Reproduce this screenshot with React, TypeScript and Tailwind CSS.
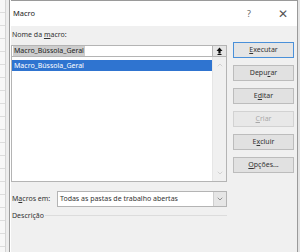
import { ChevronDown, ChevronUp } from "lucide-react";

const font = { fontFamily: '"Noto Sans", "Open Sans", sans-serif' };

function U({ children }: { children: React.ReactNode }) {
  return <span className="underline underline-offset-[1px]">{children}</span>;
}

function DlgButton({
  children,
  primary,
  disabled,
}: {
  children: React.ReactNode;
  primary?: boolean;
  disabled?: boolean;
}) {
  return (
    <div
      className={
        "flex h-[16px] items-center justify-center border text-[7px] " +
        (primary
          ? "border-[#4a90d9] bg-[#e5e5e5] text-[#333]"
          : disabled
            ? "border-[#d2d2d2] bg-[#e8e8e8] text-[#a8a8a8]"
            : "border-[#bcbcbc] bg-[#e1e1e1] text-[#333]")
      }
    >
      {children}
    </div>
  );
}

function SheetStrip() {
  const rows = Array.from({ length: 19 });
  return (
    <div className="flex h-full w-[11px] shrink-0">
      <div className="flex w-[6px] flex-col border-r border-[#d4d4d4] bg-[#f7f7f7]">
        {rows.map((_, i) => (
          <div key={i} className="h-[13px] shrink-0 border-b border-[#dcdcdc]" />
        ))}
      </div>
      <div className="w-[4px] border-r border-[#9a9a9a] bg-[#ececec]" />
    </div>
  );
}

export default function App() {
  return (
    <div className="flex h-[252px] w-[300px] overflow-hidden bg-white" style={font}>
      <SheetStrip />
      <div className="flex w-[286px] shrink-0 flex-col border-t border-[#9a9a9a]">
        <div className="flex h-[25px] shrink-0 items-center bg-white pl-[2px] text-[7.5px] text-[#222]">
          <span>Macro</span>
          <span className="ml-auto mr-[27px] text-[9px] text-[#666]">?</span>
          <span className="mr-[9px] text-[12px] font-extralight leading-none text-[#555]">✕</span>
        </div>
        <div className="flex flex-1 bg-[#f0f0f0]">
          <div className="flex w-[216px] shrink-0 flex-col">
            <div className="mt-[3px] h-[12px] pl-[1px] text-[7px] leading-[12px] text-[#333]">
              Nome da <U>m</U>acro:
            </div>
            <div className="mt-[4px] flex h-[12px]">
              <div className="flex flex-1 items-center border border-[#b4b4b4] bg-white pl-[1px]">
                <span className="bg-[#cdcdcd] px-[1px] text-[7px] leading-[10px] text-[#222]">
                  Macro_Bússola_Geral
                </span>
              </div>
              <div className="flex w-[14px] items-center justify-center border border-l-0 border-[#b4b4b4] bg-[#e6e6e6]">
                <svg width="7" height="8" viewBox="0 0 7 8">
                  <path d="M3.5 0.5 L6.5 4 L4.6 4 L4.6 6.5 L2.4 6.5 L2.4 4 L0.5 4 Z" fill="#111" />
                  <rect x="1.5" y="7" width="4" height="1" fill="#111" />
                </svg>
              </div>
            </div>
            <div className="flex h-[125px] border border-t-0 border-[#b4b4b4] bg-white">
              <div className="flex-1 pt-[3px]">
                <div className="h-[11px] bg-[#2f74d0] pl-[2px] text-[7px] leading-[11px] text-white">
                  Macro_Bússola_Geral
                </div>
              </div>
              <div className="flex w-[14px] flex-col items-center justify-between border-l border-[#e6e6e6] bg-[#f0f0f0] py-[4px]">
                <ChevronUp size={8} color="#c2c2c2" strokeWidth={2} />
                <ChevronDown size={8} color="#c2c2c2" strokeWidth={2} />
              </div>
            </div>
            <div className="mt-[9px] flex h-[16px] items-center">
              <span className="w-[46px] pl-[1px] text-[7px] text-[#333]">
                M<U>a</U>cros em:
              </span>
              <div className="flex h-full flex-1 border border-[#b4b4b4] bg-white">
                <div className="flex-1 pl-[2px] text-[7px] leading-[14px] text-[#333]">
                  Todas as pastas de trabalho abertas
                </div>
                <div className="flex w-[13px] items-center justify-center border-l border-[#cfcfcf] bg-[#e6e6e6]">
                  <ChevronDown size={8} color="#666" strokeWidth={2} />
                </div>
              </div>
            </div>
            <div className="mt-[3px] flex items-center">
              <span className="pl-[1px] text-[7px] leading-[12px] text-[#333]">Descrição</span>
              <div className="mb-[2px] ml-[1px] h-px flex-1 bg-[#dcdcdc]" />
            </div>
          </div>
          <div className="ml-[6px] mt-[16px] flex w-[61px] shrink-0 flex-col gap-[7px]">
            <DlgButton primary>
              <U>E</U>xecutar
            </DlgButton>
            <DlgButton>
              Depu<U>r</U>ar
            </DlgButton>
            <DlgButton>
              E<U>d</U>itar
            </DlgButton>
            <DlgButton disabled>
              <U>C</U>riar
            </DlgButton>
            <DlgButton>
              E<U>x</U>cluir
            </DlgButton>
            <DlgButton>
              <U>O</U>pções...
            </DlgButton>
          </div>
        </div>
      </div>
      <div className="w-[3px] shrink-0 border-l border-[#9a9a9a] bg-[#e4e4e4]" />
    </div>
  );
}
